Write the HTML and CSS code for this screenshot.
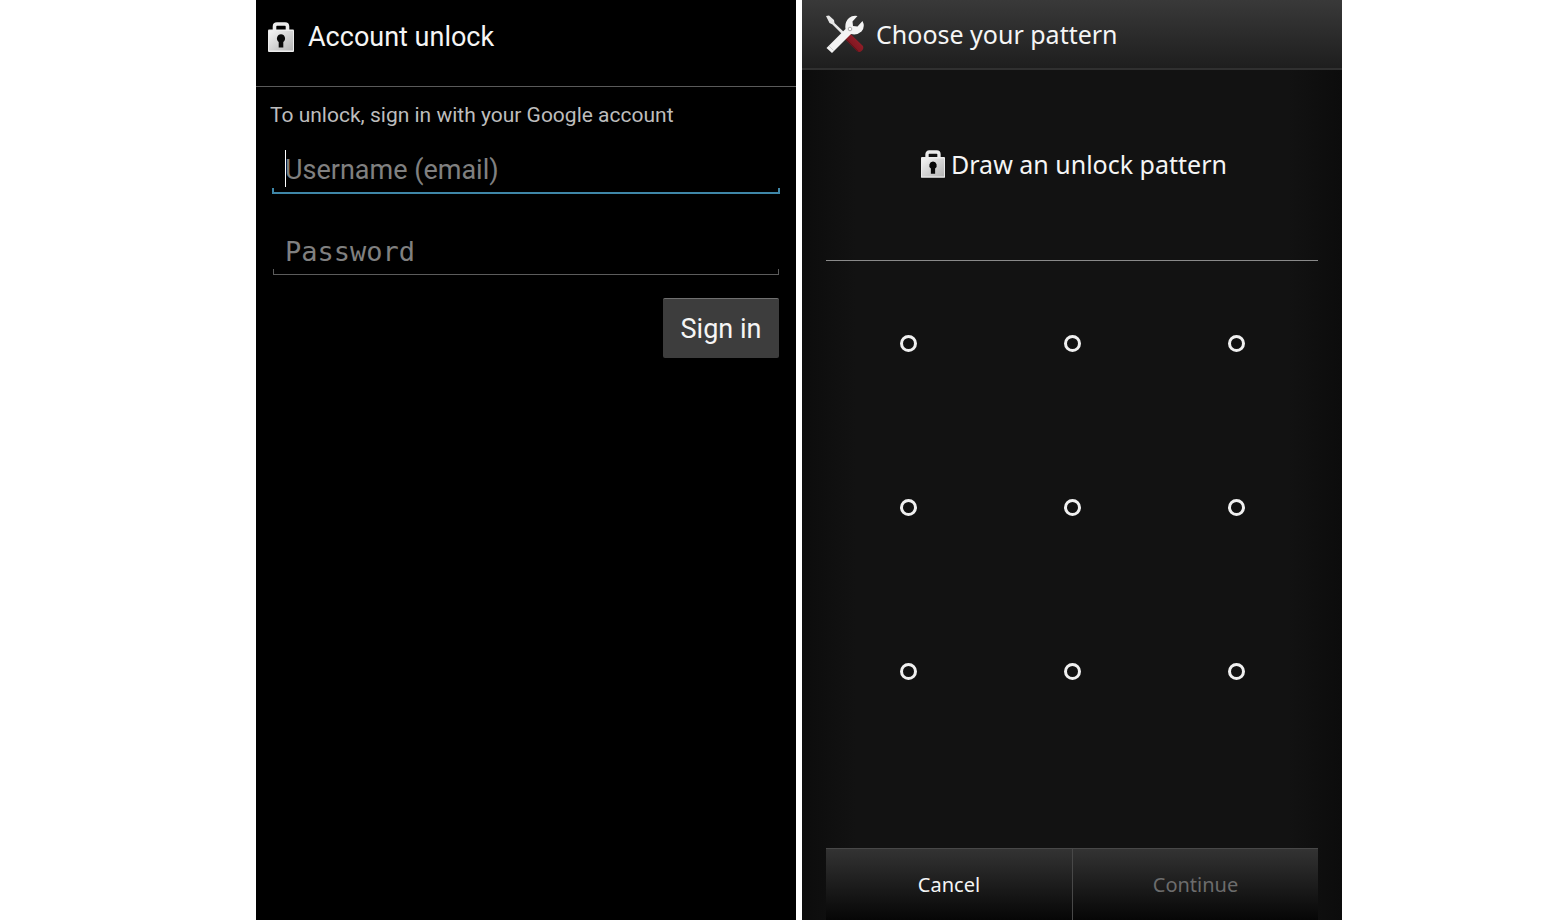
FILE: index.html
```html
<!DOCTYPE html>
<html lang="en">
<head>
    <meta charset="UTF-8">
    <meta name="viewport" content="width=device-width, initial-scale=1.0">
    <title>Account unlock</title>
    <link rel="stylesheet" href="styles.css">
</head>

<body>
    <!-- Shared gradients and the padlock -->
    <svg class="defs" aria-hidden="true">
        <defs>
            <linearGradient id="metal" x1="0" y1="0" x2="1" y2="1">
                <stop offset="0" stop-color="#f4f4f4"/>
                <stop offset="1" stop-color="#b4b4b4"/>
            </linearGradient>
            <linearGradient id="handle" x1="0" y1="1" x2="1" y2="0">
                <stop offset="0" stop-color="#6c0f17"/>
                <stop offset="1" stop-color="#a32530"/>
            </linearGradient>
            <symbol id="lock" viewBox="0 0 26 30">
                <path d="M6.5 10V4.5Q6.5 2 9 2H17Q19.5 2 19.5 4.5V10" fill="none" stroke="#ececec" stroke-width="3.6"/>
                <rect x="0" y="7.5" width="26" height="22.5" rx="1" fill="#ededed"/>
                <rect x="1" y="9" width="24" height="19.5" fill="url(#metal)"/>
                <path d="M13 12.3a4.2 4.2 0 0 1 2.3 7.6V25.5H10.7V19.9A4.2 4.2 0 0 1 13 12.3z" fill="#080808"/>
            </symbol>
        </defs>
    </svg>

    <main class="phone account">
        <header class="title-bar">
            <svg class="lock" aria-hidden="true"><use href="#lock"/></svg>
            <h1>Account unlock</h1>
        </header>

        <form class="sign-in">
            <p>To unlock, sign in with your Google account</p>
            <div class="field active">
                <input type="email" aria-label="Username (email)" placeholder="Username (email)">
            </div>
            <div class="field">
                <input type="password" aria-label="Password" placeholder="Password">
            </div>
            <button type="button" class="submit">Sign in</button>
        </form>
    </main>

    <section class="phone pattern">
        <header class="title-bar">
            <svg class="tools" viewBox="0 0 38 38" aria-hidden="true">
                <path d="M0 1L3 .5L8 5L8.5 8L19.5 18.5L17.5 20.5L6.5 9.5L3.5 8z" fill="#e6e6e6"/>
                <path d="M18 23L23.5 18L37 31Q38 34 35.5 36Q33.5 38 31 36z" fill="url(#handle)"/>
                <path d="M20 24L32 36" stroke="#6c0f17" stroke-width="1"/>
                <path d="M.5 33L19.5 14Q18.5 7 23 3Q26.5 0 31.5 1L26.5 6.5L27 11L31.5 11.5L36.5 6Q39.5 12 35.5 16.5Q31 20.5 25 19L6 38z" fill="#f3f3f3"/>
                <path d="M3 31L7.5 35.5" stroke="#cfcfcf"/>
                <circle cx="24" cy="14" r="1.8" fill="#fff" stroke="#aaa"/>
            </svg>
            <h1>Choose your pattern</h1>
        </header>

        <div class="content">
            <div class="hint">
                <svg class="lock" aria-hidden="true"><use href="#lock"/></svg>
                <h2>Draw an unlock pattern</h2>
            </div>

            <div class="dots">
                <button type="button" aria-label="Dot 1"></button>
                <button type="button" aria-label="Dot 2"></button>
                <button type="button" aria-label="Dot 3"></button>
                <button type="button" aria-label="Dot 4"></button>
                <button type="button" aria-label="Dot 5"></button>
                <button type="button" aria-label="Dot 6"></button>
                <button type="button" aria-label="Dot 7"></button>
                <button type="button" aria-label="Dot 8"></button>
                <button type="button" aria-label="Dot 9"></button>
            </div>

            <footer class="actions">
                <button type="button">Cancel</button>
                <button type="button" disabled>Continue</button>
            </footer>
        </div>
    </section>
</body>
</html>
```
FILE: styles.css
```css
* {
    box-sizing: border-box;
}

body {
    margin: 0;
    padding-left: 40px;
    min-height: 100vh;
    display: flex;
    justify-content: center;
    gap: 6px;
    background-color: #fff;
    color: #f5f5f5;
    font-family: Roboto, sans-serif;
}

h1, h2, p {
    margin: 0;
    font-weight: normal;
}

h1, h2 {
    font-size: 27px;
    line-height: 32px;
}

button, input {
    margin: 0;
    padding: 0;
    border: 0;
    font: inherit;
    color: inherit;
}

.defs {
    position: absolute;
    width: 0;
    height: 0;
}

.phone {
    flex: 0 1 540px;
    display: flex;
    flex-direction: column;
}

.title-bar {
    display: flex;
    align-items: center;
}

/* Account unlock */
.account {
    background-color: #000;
}

.account .title-bar {
    height: 87px;
    gap: 14px;
    padding: 0 12px 12px;
    border-bottom: 1px solid #5a5a5a;
}

.account .lock {
    width: 26px;
    height: 30px;
}

.sign-in {
    display: flex;
    flex-direction: column;
    padding: 16px 14px 0;
}

.sign-in p {
    font-size: 21px;
    line-height: 24px;
    color: #bdbdbd;
}

.field {
    --line: #5c5c5c;
    --weight: 1px;
    position: relative;
    height: 46px;
    margin: 35px 3px 0;
    padding: 0 12px 2px;
    background:
        linear-gradient(var(--line), var(--line)) bottom / 100% var(--weight) no-repeat,
        linear-gradient(var(--line), var(--line)) left bottom / var(--weight) 6px no-repeat,
        linear-gradient(var(--line), var(--line)) right bottom / var(--weight) 6px no-repeat;
}

.field.active {
    --line: #3f87a8;
    --weight: 2px;
    margin: 21px 2px 0;
    padding-left: 13px;
}

/* text cursor */
.field.active::before {
    content: "";
    position: absolute;
    left: 13px;
    top: 2px;
    width: 1px;
    height: 37px;
    background-color: #fff;
}

.field input {
    display: block;
    width: 100%;
    height: 44px;
    background: none;
    outline: none;
    font-size: 27px;
}

.field input::placeholder {
    color: #808080;
    opacity: 1;
}

.field input[type="password"] {
    font-family: "DejaVu Sans Mono", monospace;
}

.submit {
    align-self: flex-end;
    width: 116px;
    height: 60px;
    margin: 23px 3px 0;
    background-color: #3d3d3d;
    border-top: 1px solid #707070;
    border-radius: 2px;
    font-size: 27px;
}

/* Choose your pattern */
.pattern {
    background: linear-gradient(to right, #0c0c0c, #121212 10%, #121212 90%, #0c0c0c);
    font-family: "Noto Sans", sans-serif;
}

.pattern h1, .pattern h2 {
    font-size: 25px;
}

.pattern .title-bar {
    height: 70px;
    gap: 12px;
    padding: 0 24px;
    background: linear-gradient(#393939, #1e1e1e);
    border-bottom: 2px solid #303030;
}

.tools {
    width: 38px;
    height: 38px;
}

.content {
    flex: 1;
    display: flex;
    flex-direction: column;
    padding: 0 24px;
}

.hint {
    display: flex;
    align-items: center;
    justify-content: center;
    gap: 6px;
    height: 191px;
    border-bottom: 1px solid #8a8a8a;
    padding: 0 0 2px 4px;
}

.hint .lock {
    width: 24px;
    height: 28px;
}

.dots {
    display: grid;
    grid-template-columns: repeat(3, 1fr);
    grid-auto-rows: 164px;
    place-items: center;
}

.dots button {
    width: 17px;
    height: 17px;
    border: 3px solid #f0f0f0;
    border-radius: 50%;
    background: none;
}

.actions {
    display: grid;
    grid-template-columns: 1fr 1fr;
    height: 72px;
    margin-top: auto;
    background: linear-gradient(#333, #060606);
    border-top: 1px solid #484848;
}

.actions button {
    background: none;
    font-size: 20px;
}

.actions button + button {
    border-left: 1px solid #484848;
}

.actions button:disabled {
    color: #6c6c6c;
}
```
